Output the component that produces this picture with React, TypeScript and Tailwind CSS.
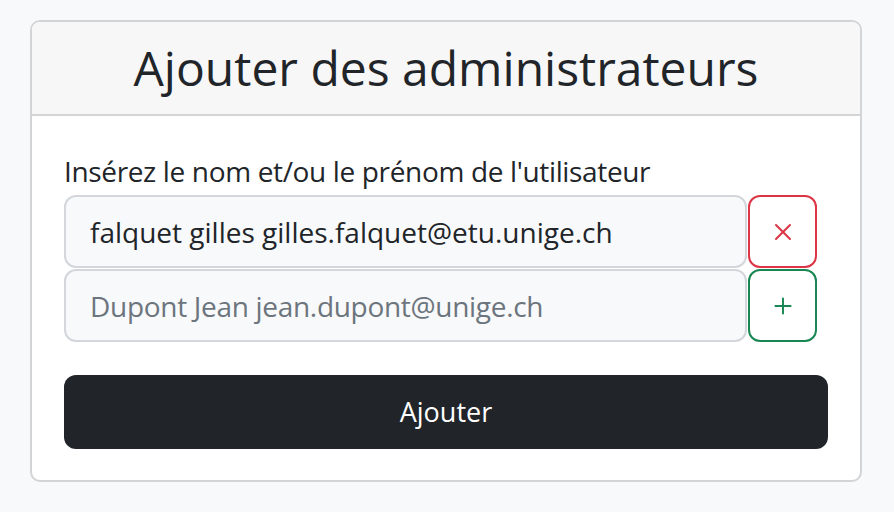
import { X, Plus } from "lucide-react";

const FONT = { fontFamily: "'Open Sans', 'Noto Sans', sans-serif" };

export default function App() {
  return (
    <div
      className="min-h-[512px] w-full bg-[#f8f9fa] px-[30px] pt-[20px]"
      style={FONT}
    >
      <div className="w-[832px] overflow-hidden rounded-[10px] border-2 border-[#d3d4d5] bg-white">
        <div className="flex h-[94px] items-center justify-center border-b-2 border-[#d3d4d5] bg-[#f7f7f7]">
          <h1 className="text-[48px] leading-none text-[#212529]">
            Ajouter des administrateurs
          </h1>
        </div>
        <div className="px-[32px] pt-[38px] pb-[31px]">
          <label className="mb-[7px] block text-[28px] leading-[34px] tracking-[-0.35px] text-[#212529]">
            Insérez le nom et/ou le prénom de l&apos;utilisateur
          </label>
          <div className="flex flex-col gap-[1px]">
            <div className="flex gap-[1px]">
              <div className="flex h-[73px] w-[683px] items-center rounded-[12px] border-2 border-[#d3d6da] bg-[#f8f9fa] px-[24px] text-[28px] text-[#212529]">
                falquet gilles gilles.falquet@etu.unige.ch
              </div>
              <button className="flex h-[73px] w-[69px] items-center justify-center rounded-[12px] border-2 border-[#dc3545] bg-white text-[#dc3545]">
                <X size={28} strokeWidth={1.7} />
              </button>
            </div>
            <div className="flex gap-[1px]">
              <div className="flex h-[73px] w-[683px] items-center rounded-[12px] border-2 border-[#d3d6da] bg-[#f8f9fa] px-[24px] text-[28px] tracking-[-0.3px] text-[#6c757d]">
                Dupont Jean jean.dupont@unige.ch
              </div>
              <button className="flex h-[73px] w-[69px] items-center justify-center rounded-[12px] border-2 border-[#198754] bg-white text-[#198754]">
                <Plus size={26} strokeWidth={1.8} />
              </button>
            </div>
          </div>
          <button className="mt-[33px] flex h-[74px] w-full items-center justify-center rounded-[12px] bg-[#212529] text-[27px] text-white">
            Ajouter
          </button>
        </div>
      </div>
    </div>
  );
}
